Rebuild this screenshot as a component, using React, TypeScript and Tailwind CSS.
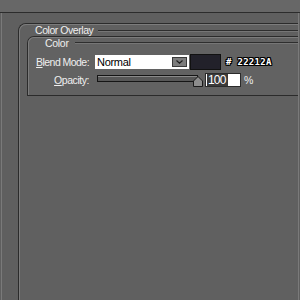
const Rule = () => (
  <div className="flex-1 h-[2px] border-t border-[#2e2e2e] border-b border-b-[#767676]" />
);

const App = () => {
  return (
    <div className="w-[300px] h-[300px] overflow-hidden flex flex-col bg-[#5f5f5f] text-[10.5px] text-[#efefef] font-['Liberation_Sans',Arial,sans-serif]">
      <div className="h-[13px] shrink-0 bg-[#676767] border-b border-[#2c2c2c]" />
      <div className="flex-1 flex flex-col mx-px pl-[16px] pt-[10px] border-l border-r border-[#7a7a7a]">
        {/* Color Overlay panel */}
        <div className="flex-1 flex flex-col rounded-tl-[8px] border-l border-t border-[#2b2b2b]">
          <div className="flex-1 flex flex-col rounded-tl-[7px] border-l border-t border-[#7c7c7c] bg-[#606060]">
            <div className="h-[11px] flex items-center pl-[15px]">
              <span className="leading-none tracking-[-0.45px] whitespace-nowrap">Color Overlay</span>
              <div className="ml-[5px] flex-1 flex">
                <Rule />
              </div>
            </div>

            {/* Color group */}
            <div className="ml-[7px] rounded-tl-[7px] border-l border-t border-b border-[#2b2b2b]">
              <div className="flex flex-col rounded-tl-[6px] border-l border-t border-[#7c7c7c] bg-[#626262] pb-[8px]">
                <div className="h-[10px] flex items-center pl-[16px]">
                  <span className="leading-none tracking-[-0.3px] whitespace-nowrap">Color</span>
                  <div className="ml-[6px] flex-1 flex">
                    <Rule />
                  </div>
                </div>

                <div className="mt-[6px] h-[16px] flex items-center">
                  <div className="w-[60px] text-right whitespace-nowrap tracking-[-0.55px] leading-none">
                    <span className="underline underline-offset-[1px]">B</span>lend Mode:
                  </div>
                  <div className="ml-[6px] w-[94px] h-[14px] bg-white flex items-center justify-between pl-[2px] pr-[2px] text-black text-[11px] leading-none">
                    <span className="tracking-[-0.3px]">Normal</span>
                    <div className="w-[15px] h-[10px] bg-[#7d7d7d] border border-[#3a3a3a] flex items-center justify-center">
                      <svg width="7" height="4" viewBox="0 0 7 4">
                        <path d="M0.5 0.5 L3.5 3.2 L6.5 0.5" fill="none" stroke="#1e1e1e" strokeWidth="1.2" />
                      </svg>
                    </div>
                  </div>
                  <div className="ml-px w-[31px] h-[16px] bg-[#22212a] border border-[#111]" />
                  <span className="ml-[5px] text-white text-[9px] font-bold tracking-[0.3px] leading-none font-['DejaVu_Sans_Mono',monospace] [text-shadow:1px_0_0_#000,-1px_0_0_#000,0_1px_0_#000,0_-1px_0_#000,1px_1px_0_#000,-1px_-1px_0_#000,1px_-1px_0_#000,-1px_1px_0_#000]">
                    # 22212A
                  </span>
                </div>

                <div className="mt-[3px] h-[14px] flex items-center">
                  <div className="w-[60px] text-right whitespace-nowrap tracking-[-0.45px] leading-none">
                    <span className="underline underline-offset-[1px]">O</span>pacity:
                  </div>
                  <div className="ml-[8px] w-[105px] h-[14px] relative">
                    <div className="absolute left-0 right-[4px] top-[2px] h-[7px] border border-[#151515] bg-[#575757] shadow-[inset_0_1px_0_#8a8a8a]" />
                    <svg className="absolute left-[96px] top-[3px]" width="10" height="11" viewBox="0 0 10 11">
                      <polygon points="0.5,10.5 0.5,5 5,0.5 9.5,5 9.5,10.5" fill="#8c8c8c" stroke="#1a1a1a" strokeWidth="1" />
                    </svg>
                  </div>
                  <div className="ml-[3px] w-[36px] h-[14px] bg-white border border-[#2a2a2a] flex items-center">
                    <span className="ml-px bg-[#3b3b3b] text-white text-[12px] leading-[12px] tracking-[-0.8px] pl-px pr-[2px]">100</span>
                  </div>
                  <span className="ml-[3px] leading-none">%</span>
                </div>
              </div>
            </div>
          </div>
        </div>
      </div>
    </div>
  );
};

export default App;
